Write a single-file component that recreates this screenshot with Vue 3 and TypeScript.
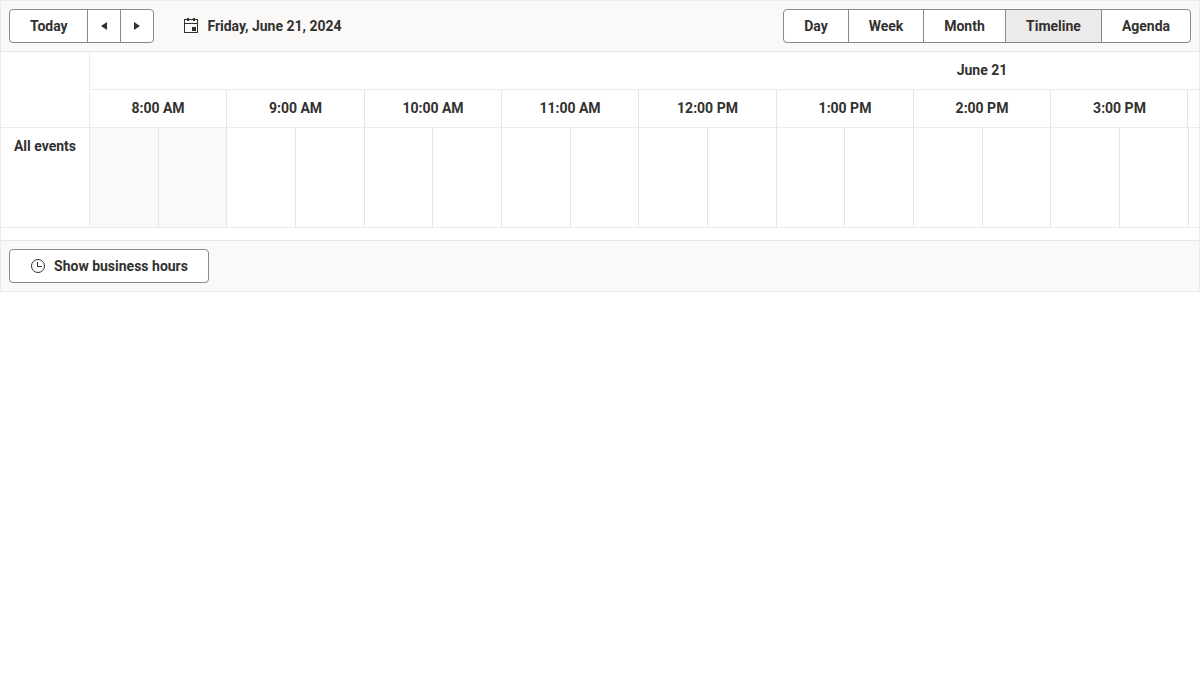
<script setup lang="ts">
interface Slot {
  label: string
  width: number
}

const views: { name: string; width: number }[] = [
  { name: 'Day', width: 66 },
  { name: 'Week', width: 76 },
  { name: 'Month', width: 83 },
  { name: 'Timeline', width: 97 },
  { name: 'Agenda', width: 90 },
]
const activeView = 'Timeline'

const hours: Slot[] = [
  { label: '8:00 AM', width: 137 },
  { label: '9:00 AM', width: 138 },
  { label: '10:00 AM', width: 137 },
  { label: '11:00 AM', width: 137 },
  { label: '12:00 PM', width: 138 },
  { label: '1:00 PM', width: 137 },
  { label: '2:00 PM', width: 137 },
  { label: '3:00 PM', width: 137 },
]
const halfHours: number[] = [69, 68, 69, 69, 68, 69, 69, 68, 69, 69, 68, 69, 69, 68, 69, 69]
</script>

<template>
  <div class="scheduler">
    <header class="toolbar">
      <div class="group">
        <button class="btn today">Today</button>
        <button class="btn arrow" aria-label="Previous">
          <svg width="16" height="16" viewBox="0 0 16 16"><path d="M11 4v8L5 8z" fill="currentColor" /></svg>
        </button>
        <button class="btn arrow" aria-label="Next">
          <svg width="16" height="16" viewBox="0 0 16 16"><path d="M5 4v8l6-4z" fill="currentColor" /></svg>
        </button>
      </div>
      <div class="date">
        <svg width="16" height="16" viewBox="0 0 16 16" fill="currentColor">
          <path d="M1 1h14v14H1zM2 2v3h12V2zM2 6v8h12V6z" fill-rule="evenodd" />
          <path d="M4 0h2v3H4zM10 0h2v3h-2zM9 9h4v4H9z" />
        </svg>
        <span>Friday, June 21, 2024</span>
      </div>
      <div class="group views">
        <button
          v-for="view in views"
          :key="view.name"
          class="btn"
          :class="{ active: view.name === activeView }"
          :style="{ width: view.width + 'px' }"
        >{{ view.name }}</button>
      </div>
    </header>

    <main class="timeline">
      <div class="side">
        <div class="corner"></div>
        <div class="resource">All events</div>
      </div>
      <div class="content">
        <div class="row day"><div class="day-label">June 21</div></div>
        <div class="row labels">
          <div v-for="hour in hours" :key="hour.label" class="cell" :style="{ width: hour.width + 'px' }">
            {{ hour.label }}
          </div>
        </div>
        <div class="row slots">
          <div
            v-for="(width, i) in halfHours"
            :key="i"
            class="cell"
            :class="{ off: i < 2 }"
            :style="{ width: width + 'px' }"
          ></div>
        </div>
      </div>
    </main>

    <footer class="footer">
      <button class="btn hours">
        <svg width="16" height="16" viewBox="0 0 16 16" fill="none" stroke="currentColor">
          <circle cx="8" cy="8" r="6.5" />
          <path d="M7.5 4v4.5H12" />
        </svg>
        <span>Show business hours</span>
      </button>
    </footer>
  </div>
</template>

<style>
body {
  margin: 0;
  background: #fff;
}
</style>

<style scoped>
.scheduler {
  box-sizing: border-box;
  width: 1200px;
  height: 292px;
  border: 1px solid #ebebea;
  font: 700 14px/20px Roboto, sans-serif;
  color: #323130;
  overflow: hidden;
}
.toolbar {
  display: flex;
  align-items: center;
  box-sizing: border-box;
  height: 51px;
  padding: 0 8px;
  background: #faf9f8;
  border-bottom: 1px solid #e6e6e5;
}
.group {
  display: flex;
}
.btn {
  display: flex;
  align-items: center;
  justify-content: center;
  box-sizing: border-box;
  height: 34px;
  margin: 0;
  padding: 0;
  border: 1px solid #8a8886;
  background: #fff;
  color: inherit;
  font: inherit;
}
.group .btn + .btn {
  margin-left: -1px;
}
.group .btn:first-child {
  border-radius: 4px 0 0 4px;
}
.group .btn:last-child {
  border-radius: 0 4px 4px 0;
}
.btn.active {
  background: #edebe9;
}
.today {
  width: 79px;
  padding-left: 0.6px;
}
.arrow {
  width: 34px;
}
.date {
  display: flex;
  align-items: center;
  gap: 8.4px;
  margin-left: 29px;
}
.views {
  margin-left: auto;
}
.timeline {
  display: flex;
  align-items: flex-start;
  height: 188px;
}
.side {
  flex: none;
  width: 88px;
  border-right: 1px solid #ebebea;
}
.corner {
  height: 75px;
  border-bottom: 1px solid #ebebea;
}
.resource {
  height: 91px;
  padding-top: 8px;
  margin-right: -1px;
  padding-right: 1px;
  border-bottom: 1px solid #ebebea;
  text-align: center;
}
.content {
  flex: 1;
  min-width: 0;
  overflow: hidden;
}
.row {
  display: flex;
  height: 37px;
  line-height: 36px;
  border-bottom: 1px solid #ebebea;
}
.day-label {
  flex: none;
  width: 1784px;
  text-align: center;
}
.slots {
  height: 99px;
}
.cell {
  flex: none;
  box-sizing: border-box;
  border-right: 1px solid #e6e6e5;
  text-align: center;
}
.labels .cell:last-child {
  padding-left: 1px;
}
.off {
  background: #faf9f8;
}
.footer {
  display: flex;
  align-items: center;
  box-sizing: border-box;
  height: 51px;
  padding: 0 8px;
  background: #faf9f8;
  border-top: 1px solid #e6e6e5;
}
.hours {
  width: 200px;
  gap: 8px;
  border-radius: 4px;
}
</style>
